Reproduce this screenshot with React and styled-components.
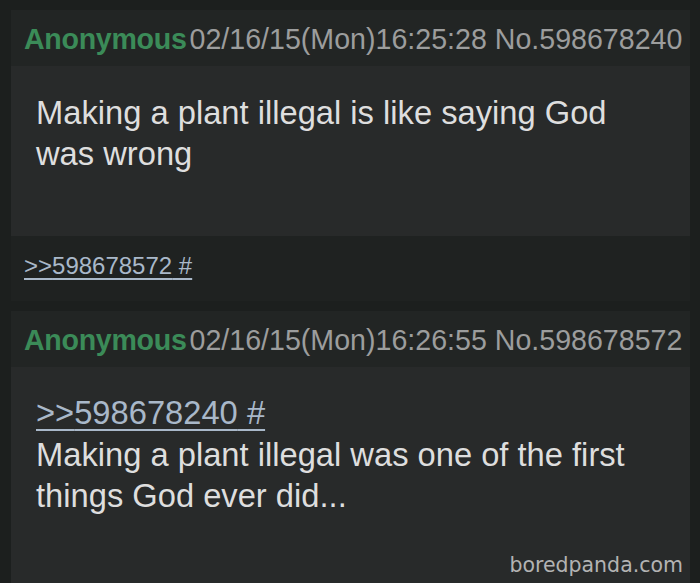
import styled, { createGlobalStyle } from "styled-components";

const Global = createGlobalStyle`
  html, body {
    margin: 0;
    padding: 0;
    background: #1c1f1e;
  }
  body {
    font-family: "Liberation Sans", Arial, sans-serif;
  }
`;

const posts = [
  {
    id: "598678240",
    date: "02/16/15(Mon)16:25:28",
    lines: ["Making a plant illegal is like saying God", "was wrong"],
    replies: ["598678572"],
  },
  {
    id: "598678572",
    date: "02/16/15(Mon)16:26:55",
    quote: "598678240",
    lines: ["Making a plant illegal was one of the first", "things God ever did..."],
  },
];

function App() {
  return (
    <Page>
      <Global />
      {posts.map((p, i) => (
        <Post key={p.id} $grow={i === posts.length - 1}>
          <Header>
            <Name>Anonymous</Name>
            <Meta>
              {p.date} No.{p.id}
            </Meta>
          </Header>
          <Body $quoted={!!p.quote}>
            {p.quote && <QuoteLink>&gt;&gt;{p.quote} #</QuoteLink>}
            {p.lines.map((l) => (
              <Line key={l}>{l}</Line>
            ))}
          </Body>
          {p.replies && (
            <Footer>
              {p.replies.map((r) => (
                <ReplyLink key={r}>&gt;&gt;{r} #</ReplyLink>
              ))}
            </Footer>
          )}
        </Post>
      ))}
      <Watermark>boredpanda.com</Watermark>
    </Page>
  );
}

const Page = styled.div`
  position: relative;
  height: 583px;
  overflow: hidden;
  padding: 10px 10px 0 11px;
  box-sizing: border-box;
  display: flex;
  flex-direction: column;
  gap: 10px;
`;

const Post = styled.div`
  background: #222524;
  display: flex;
  flex-direction: column;
  flex: ${(p) => (p.$grow ? "1" : "none")};
`;

const Header = styled.div`
  height: 56px;
  display: flex;
  align-items: center;
  gap: 3px;
  padding: 2px 13px 0;
  box-sizing: border-box;
  font-size: 28.6px;
  white-space: nowrap;
`;

const Name = styled.span`
  color: #3b8b58;
  font-weight: bold;
  letter-spacing: -0.3px;
`;

const Meta = styled.span`
  color: #9c9d9d;
`;

const Body = styled.div`
  background: #282a2a;
  padding: ${(p) => (p.$quoted ? "24px 25px 40px" : "26px 25px 62px")};
  color: #dedede;
  font-size: 32.7px;
  line-height: 41px;
  flex: 1;
`;

const Line = styled.div`
  white-space: nowrap;
`;

const QuoteLink = styled.a`
  display: inline-block;
  color: #a9b8c9;
  text-decoration: underline;
  text-decoration-thickness: 2px;
  text-underline-offset: 5px;
  line-height: 43px;
`;

const Footer = styled.div`
  background: #1f2221;
  padding: 16px 13px 21px;
  font-size: 24px;
  line-height: 28px;
`;

const ReplyLink = styled.a`
  color: #a9b8c9;
  text-decoration: underline;
  text-decoration-thickness: 2px;
  text-underline-offset: 4px;
`;

const Watermark = styled.div`
  position: absolute;
  right: 17px;
  bottom: 6px;
  font-family: "DejaVu Sans", Verdana, sans-serif;
  font-size: 20.5px;
  color: #b3b3b3;
`;

export default App;
